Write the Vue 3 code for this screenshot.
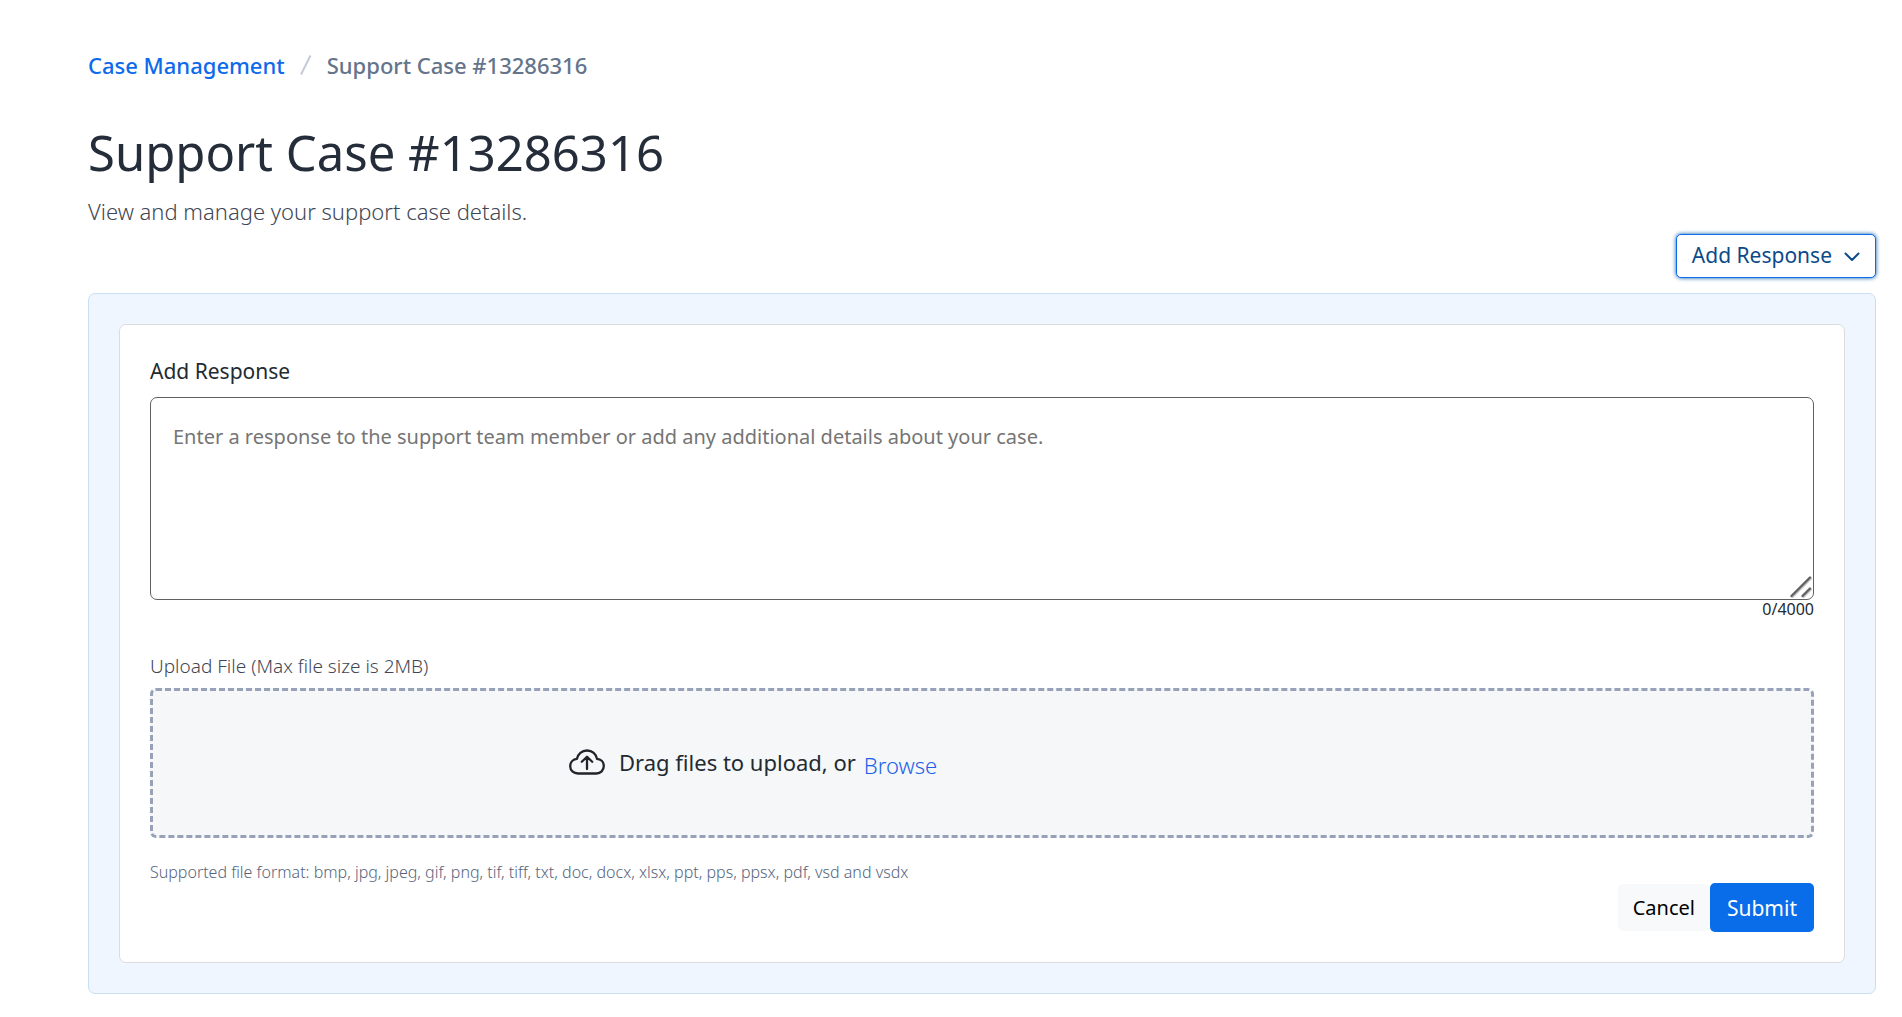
<script setup>
import { computed, ref } from 'vue'

const caseNumber = '13286316'
const maxLength = 4000
const response = ref('')
const counter = computed(() => `${response.value.length}/${maxLength}`)
const formats = 'bmp, jpg, jpeg, gif, png, tif, tiff, txt, doc, docx, xlsx, ppt, pps, ppsx, pdf, vsd and vsdx'
</script>

<template>
  <main class="page">
    <nav class="breadcrumb" aria-label="Breadcrumb">
      <a href="#cases">Case Management</a>
      <svg class="slash" viewBox="0 0 12 20" aria-hidden="true"><path d="M1 19.500 10.500 .5" /></svg>
      <span aria-current="page">Support Case #{{ caseNumber }}</span>
    </nav>

    <h1>Support Case #{{ caseNumber }}</h1>
    <p class="subtitle">View and manage your support case details.</p>

    <div class="toolbar">
      <button type="button" class="menu-button" aria-haspopup="true">
        <span>Add Response</span>
        <svg viewBox="0 0 16 10" aria-hidden="true"><path d="M1.500 1.500 8 8l6.500-6.500" /></svg>
      </button>
    </div>

    <section class="panel">
      <form class="card" @submit.prevent>
        <label class="field-label" for="response">Add Response</label>
        <div class="text-wrap">
          <textarea
            id="response"
            v-model="response"
            :maxlength="maxLength"
            placeholder="Enter a response to the support team member or add any additional details about your case."
          ></textarea>
          <svg class="grip" viewBox="0 0 22 22" aria-hidden="true">
            <path class="shade" d="M2.500 21 21 2.500M13.500 21l7.500-7.500" />
            <path d="M1.500 20 20 1.500M12.500 20l7.500-7.500" />
          </svg>
        </div>
        <div class="counter">{{ counter }}</div>

        <div class="upload-label">Upload File (Max file size is 2MB)</div>
        <div class="dropzone">
          <svg class="cloud" viewBox="0 0 36 26" aria-hidden="true">
            <path d="M9 24.500C4.500 24.500 1.200 21.300 1.200 17.200 1.200 13.300 4 10.300 7.900 9.900 8.800 5 12.900 1.500 18 1.500c5.300 0 9.200 3.600 10 8.400 4 .3 6.800 3.300 6.800 7.200 0 4.200-3.200 7.400-7.300 7.400z" />
            <path d="M18 20V8M12.800 12.800 18 7.700l5.200 5.100" />
          </svg>
          <span class="drag">Drag files to upload, or</span>
          <a class="browse" href="#browse">Browse</a>
        </div>
        <p class="formats">Supported file format: {{ formats }}</p>

        <div class="actions">
          <button type="button" class="cancel">Cancel</button>
          <button type="submit" class="submit">Submit</button>
        </div>
      </form>
    </section>
  </main>
</template>

<style>
body {
  background: #fff;
}
</style>

<style scoped>
.page {
  box-sizing: border-box;
  padding: 50px 26px 22px 88px;
  font-family: "Noto Sans", sans-serif;
  color: #232a31;
}
.page *,
.page *::before {
  box-sizing: border-box;
}
.breadcrumb {
  display: flex;
  align-items: center;
  gap: 15px;
  height: 30px;
  font-size: 22px;
  font-weight: 500;
  line-height: 30px;
  color: #64748b;
}
.breadcrumb a {
  color: #0d6aeb;
  text-decoration: none;
}
.slash {
  width: 12px;
  height: 20px;
  fill: none;
  stroke: #c3cad8;
  stroke-width: 2;
}
h1 {
  margin: 40px 0 0;
  font-size: 49px;
  font-weight: 400;
  line-height: 64px;
  color: #252d3a;
}
.subtitle {
  margin: 12px 0 0;
  font-size: 22px;
  font-weight: 300;
  line-height: 30px;
  color: #3f4754;
}
.toolbar {
  display: flex;
  justify-content: flex-end;
  margin: 8px 0 15px;
}
button {
  font-family: inherit;
  cursor: pointer;
}
.menu-button {
  display: flex;
  align-items: center;
  gap: 12px;
  height: 44px;
  padding: 0 15px 2px;
  border: 1px solid #0d6aeb;
  border-radius: 5px;
  background: #fff;
  box-shadow: 0 0 4px #0b5cab;
  font-size: 21px;
  color: #0b4a8a;
}
.menu-button svg {
  width: 16px;
  height: 10px;
  margin-top: 3px;
  fill: none;
  stroke: #0b4a8a;
  stroke-width: 2;
  stroke-linecap: round;
  stroke-linejoin: round;
}
.panel {
  padding: 30px;
  border: 1px solid #c9dff2;
  border-radius: 7px;
  background: #eff6ff;
}
.card {
  padding: 30px;
  border: 1px solid #dcdcdc;
  border-radius: 7px;
  background: #fff;
}
.field-label {
  display: block;
  margin-bottom: 10px;
  font-size: 21px;
  line-height: 32px;
}
.text-wrap {
  position: relative;
}
textarea {
  display: block;
  width: 100%;
  height: 203px;
  padding: 24px 22px;
  border: 1px solid #5f6062;
  border-radius: 7px;
  outline: none;
  resize: none;
  background: #fff;
  font-family: "Noto Sans", sans-serif;
  font-size: 20px;
  line-height: 30px;
  color: #232a31;
}
textarea::placeholder {
  color: #757575;
  opacity: 1;
}
.grip {
  position: absolute;
  right: 2px;
  bottom: 2px;
  width: 22px;
  height: 22px;
  fill: none;
  stroke: #606163;
  stroke-width: 2.4;
  stroke-linecap: round;
  pointer-events: none;
}
.grip .shade {
  stroke: #c9c9c9;
}
.counter {
  font-size: 16px;
  line-height: 18px;
  text-align: right;
}
.upload-label {
  margin: 33px 0 7px;
  font-size: 19px;
  font-weight: 300;
  line-height: 30px;
  color: #3f4754;
}
.dropzone {
  display: flex;
  align-items: center;
  height: 150px;
  padding: 0 0 2px 25%;
  border: 3px dashed #97a1b8;
  border-radius: 6px;
  background: #f5f7f9;
}
.cloud {
  width: 36px;
  height: 26px;
  margin-right: 14px;
  fill: none;
  stroke: #212529;
  stroke-width: 2.3;
  stroke-linecap: round;
  stroke-linejoin: round;
}
.drag {
  font-size: 22px;
  line-height: 30px;
}
.browse {
  margin: 5px 0 0 8px;
  font-size: 22px;
  font-weight: 300;
  line-height: 30px;
  color: #1d5fe8;
  text-decoration: none;
}
.formats {
  margin: 24px 0 1px;
  font-size: 16px;
  font-weight: 300;
  line-height: 20px;
  color: #56657d;
}
.actions {
  display: flex;
  align-items: center;
  justify-content: flex-end;
}
.cancel,
.submit {
  border: 0;
  border-radius: 5px;
  line-height: 30px;
}
.cancel {
  height: 47px;
  padding: 0 15px;
  background: #f8f9fb;
  font-size: 20px;
  color: #000;
}
.submit {
  height: 49px;
  padding: 0 17px;
  background: #096ce9;
  font-size: 21px;
  color: #fff;
}
</style>
